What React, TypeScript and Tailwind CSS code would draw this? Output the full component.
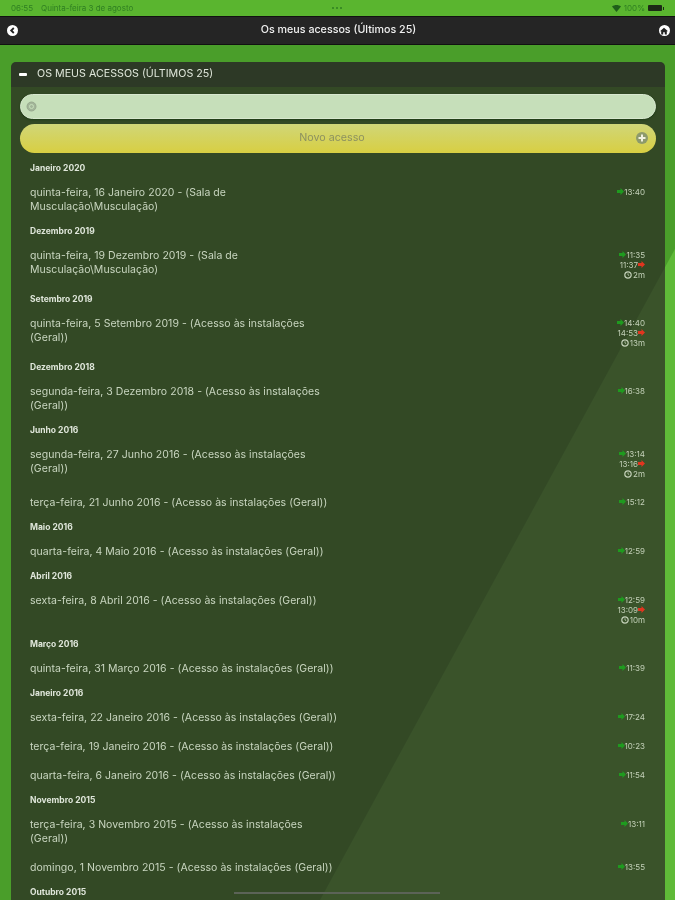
import React from "react";

type Entry = { text: string; in: string; out?: string; total?: string };
type Group = { month: string; entries: Entry[] };

const GERAL = "(Acesso às instalações (Geral))";
const SALA = "(Sala de Musculação\\Musculação)";

const groups: Group[] = [
  { month: "Janeiro 2020", entries: [{ text: `quinta-feira, 16 Janeiro 2020 - ${SALA}`, in: "13:40" }] },
  { month: "Dezembro 2019", entries: [{ text: `quinta-feira, 19 Dezembro 2019 - ${SALA}`, in: "11:35", out: "11:37", total: "2m" }] },
  { month: "Setembro 2019", entries: [{ text: `quinta-feira, 5 Setembro 2019 - ${GERAL}`, in: "14:40", out: "14:53", total: "13m" }] },
  { month: "Dezembro 2018", entries: [{ text: `segunda-feira, 3 Dezembro 2018 - ${GERAL}`, in: "16:38" }] },
  {
    month: "Junho 2016",
    entries: [
      { text: `segunda-feira, 27 Junho 2016 - ${GERAL}`, in: "13:14", out: "13:16", total: "2m" },
      { text: `terça-feira, 21 Junho 2016 - ${GERAL}`, in: "15:12" },
    ],
  },
  { month: "Maio 2016", entries: [{ text: `quarta-feira, 4 Maio 2016 - ${GERAL}`, in: "12:59" }] },
  { month: "Abril 2016", entries: [{ text: `sexta-feira, 8 Abril 2016 - ${GERAL}`, in: "12:59", out: "13:09", total: "10m" }] },
  { month: "Março 2016", entries: [{ text: `quinta-feira, 31 Março 2016 - ${GERAL}`, in: "11:39" }] },
  {
    month: "Janeiro 2016",
    entries: [
      { text: `sexta-feira, 22 Janeiro 2016 - ${GERAL}`, in: "17:24" },
      { text: `terça-feira, 19 Janeiro 2016 - ${GERAL}`, in: "10:23" },
      { text: `quarta-feira, 6 Janeiro 2016 - ${GERAL}`, in: "11:54" },
    ],
  },
  {
    month: "Novembro 2015",
    entries: [
      { text: `terça-feira, 3 Novembro 2015 - ${GERAL}`, in: "13:11" },
      { text: `domingo, 1 Novembro 2015 - ${GERAL}`, in: "13:55" },
    ],
  },
  { month: "Outubro 2015", entries: [] },
];

function Arrow({ color }: { color: string }) {
  return (
    <svg width="7" height="7" viewBox="0 0 7 7" className="shrink-0" aria-hidden>
      <path d="M7 3.500 3.500 0V2H0V5H3.500V7Z" fill={color} />
    </svg>
  );
}

function Times({ entry }: { entry: Entry }) {
  return (
    <div className="flex w-[40px] shrink-0 flex-col items-end pb-[2px] pt-[1px] text-[8px] leading-[10px] text-[#c3d0b8]">
      <div className="flex items-center">
        <Arrow color="#1f9a1f" />
        <span>{entry.in}</span>
      </div>
      {entry.out && (
        <div className="flex items-center">
          <span>{entry.out}</span>
          <Arrow color="#e0351f" />
        </div>
      )}
      {entry.total && (
        <div className="flex items-center gap-[1px]">
          <svg width="8" height="8" viewBox="0 0 8 8" className="shrink-0" aria-hidden>
            <circle cx="4" cy="4" r="3.200" fill="none" stroke="#c3d0b8" strokeWidth="1.200" />
            <path d="M4 2.300V4l1.200 .7" fill="none" stroke="#c3d0b8" strokeWidth=".8" />
          </svg>
          <span>{entry.total}</span>
        </div>
      )}
    </div>
  );
}

export default function App() {
  return (
    <div
      className="relative flex h-[900px] w-[675px] flex-col overflow-hidden bg-[linear-gradient(118.6deg,#4a9e2a_69.5%,#5fba38_69.6%)] blur-[0.6px]"
      style={{ fontFamily: "Inter, sans-serif" }}
    >
      {/* Status bar */}
      <div className="relative flex h-[16px] shrink-0 items-center justify-between bg-[#5ab52f] px-[11px] text-[8px] text-[#2f7f22]">
        <div className="flex gap-[8px]">
          <span>06:55</span>
          <span>Quinta-feira 3 de agosto</span>
        </div>
        <div className="absolute left-[332px] top-[7px] flex gap-[2px]">
          <span className="h-[2px] w-[2px] rounded-full bg-[#2f7f22]" />
          <span className="h-[2px] w-[2px] rounded-full bg-[#2f7f22]" />
          <span className="h-[2px] w-[2px] rounded-full bg-[#2f7f22]" />
        </div>
        <div className="flex items-center gap-[3px]">
          <svg width="9" height="7" viewBox="0 0 9 7" aria-hidden>
            <path d="M0 1.500C2.500-.5 6.500-.5 9 1.500L4.500 7Z" fill="#1f5f1a" />
          </svg>
          <span>100%</span>
          <span className="h-[6px] w-[14px] rounded-[1px] bg-[#1c2a16]" />
          <span className="-ml-[2px] h-[3px] w-[1px] bg-[#1c2a16]" />
        </div>
      </div>

      {/* Nav bar */}
      <div className="flex h-[29px] shrink-0 items-center justify-between border-y border-[#111] bg-[#252525] pl-[7px] pr-[5px]">
        <span className="flex h-[11px] w-[11px] items-center justify-center rounded-full bg-white">
          <svg width="7" height="7" viewBox="0 0 7 7" aria-hidden>
            <path d="M4.800 1 2.200 3.500 4.800 6" fill="none" stroke="#222" strokeWidth="1.800" />
          </svg>
        </span>
        <span className="text-[10.700px] font-medium text-[#f0f0f0]">Os meus acessos (Últimos 25)</span>
        <span className="flex h-[11px] w-[11px] items-center justify-center rounded-full bg-white">
          <svg width="8" height="8" viewBox="0 0 8 8" aria-hidden>
            <path d="M4 .8 8 4.300H6.800V7.500H4.800V5.300H3.200V7.500H1.200V4.300H0Z" fill="#222" />
          </svg>
        </span>
      </div>

      {/* Panel */}
      <div className="ml-[11px] mr-[10px] mt-[17px] flex-1 rounded-t-[5px] bg-[rgba(39,27,36,0.65)]">
        <div className="flex h-[25px] items-center gap-[10px] rounded-t-[5px] bg-[rgba(34,30,40,0.35)] px-[8px] text-[10.700px] text-[#dfe6da]">
          <span className="h-[3px] w-[8px] rounded-[1px] bg-white" />
          <span>OS MEUS ACESSOS (ÚLTIMOS 25)</span>
        </div>

        <div className="flex flex-col gap-[5px] px-[9px] pt-[7px]">
          <div className="flex h-[25px] items-center rounded-full border border-[#d8e8cf] bg-[#c6dfba] pl-[5px] shadow-[0_1px_2px_#1f3d17]">
            <svg width="11" height="11" viewBox="0 0 11 11" aria-hidden>
              <circle cx="5.500" cy="5.500" r="4.500" fill="#a3b69a" stroke="#97a98e" />
              <circle cx="5.500" cy="5.500" r="2" fill="none" stroke="#c6dfba" />
            </svg>
          </div>
          <div className="relative flex h-[29px] items-center justify-center rounded-full bg-[linear-gradient(#d0d678,#d8cf42)] pr-[12px] text-[10.700px] text-[#8c9160]">
            Novo acesso
            <svg width="12" height="12" viewBox="0 0 12 12" className="absolute right-[8px] top-[8px]" aria-hidden>
              <circle cx="6" cy="6" r="6" fill="#8d9a6b" />
              <path d="M6 2.500v7M2.500 6h7" stroke="#f1f1e0" strokeWidth="2" />
            </svg>
          </div>
        </div>

        <div className="mt-[5px] pl-[19px] pr-[20px]">
          {groups.map((g) => (
            <div key={g.month}>
              <div className="flex h-[20px] items-center text-[8.500px] font-bold text-[#dfe6da]">{g.month}</div>
              {g.entries.map((e) => (
                <div key={e.text} className="flex justify-between py-[7.500px]">
                  <div className="w-[309px] text-[10.500px] leading-[14px] tracking-[0.04px] text-[#c9d6c0]">{e.text}</div>
                  <Times entry={e} />
                </div>
              ))}
            </div>
          ))}
        </div>
      </div>

      {/* Home indicator */}
      <div className="absolute bottom-[6px] left-[234px] h-[2px] w-[206px] bg-[#5b6357]" />
    </div>
  );
}
